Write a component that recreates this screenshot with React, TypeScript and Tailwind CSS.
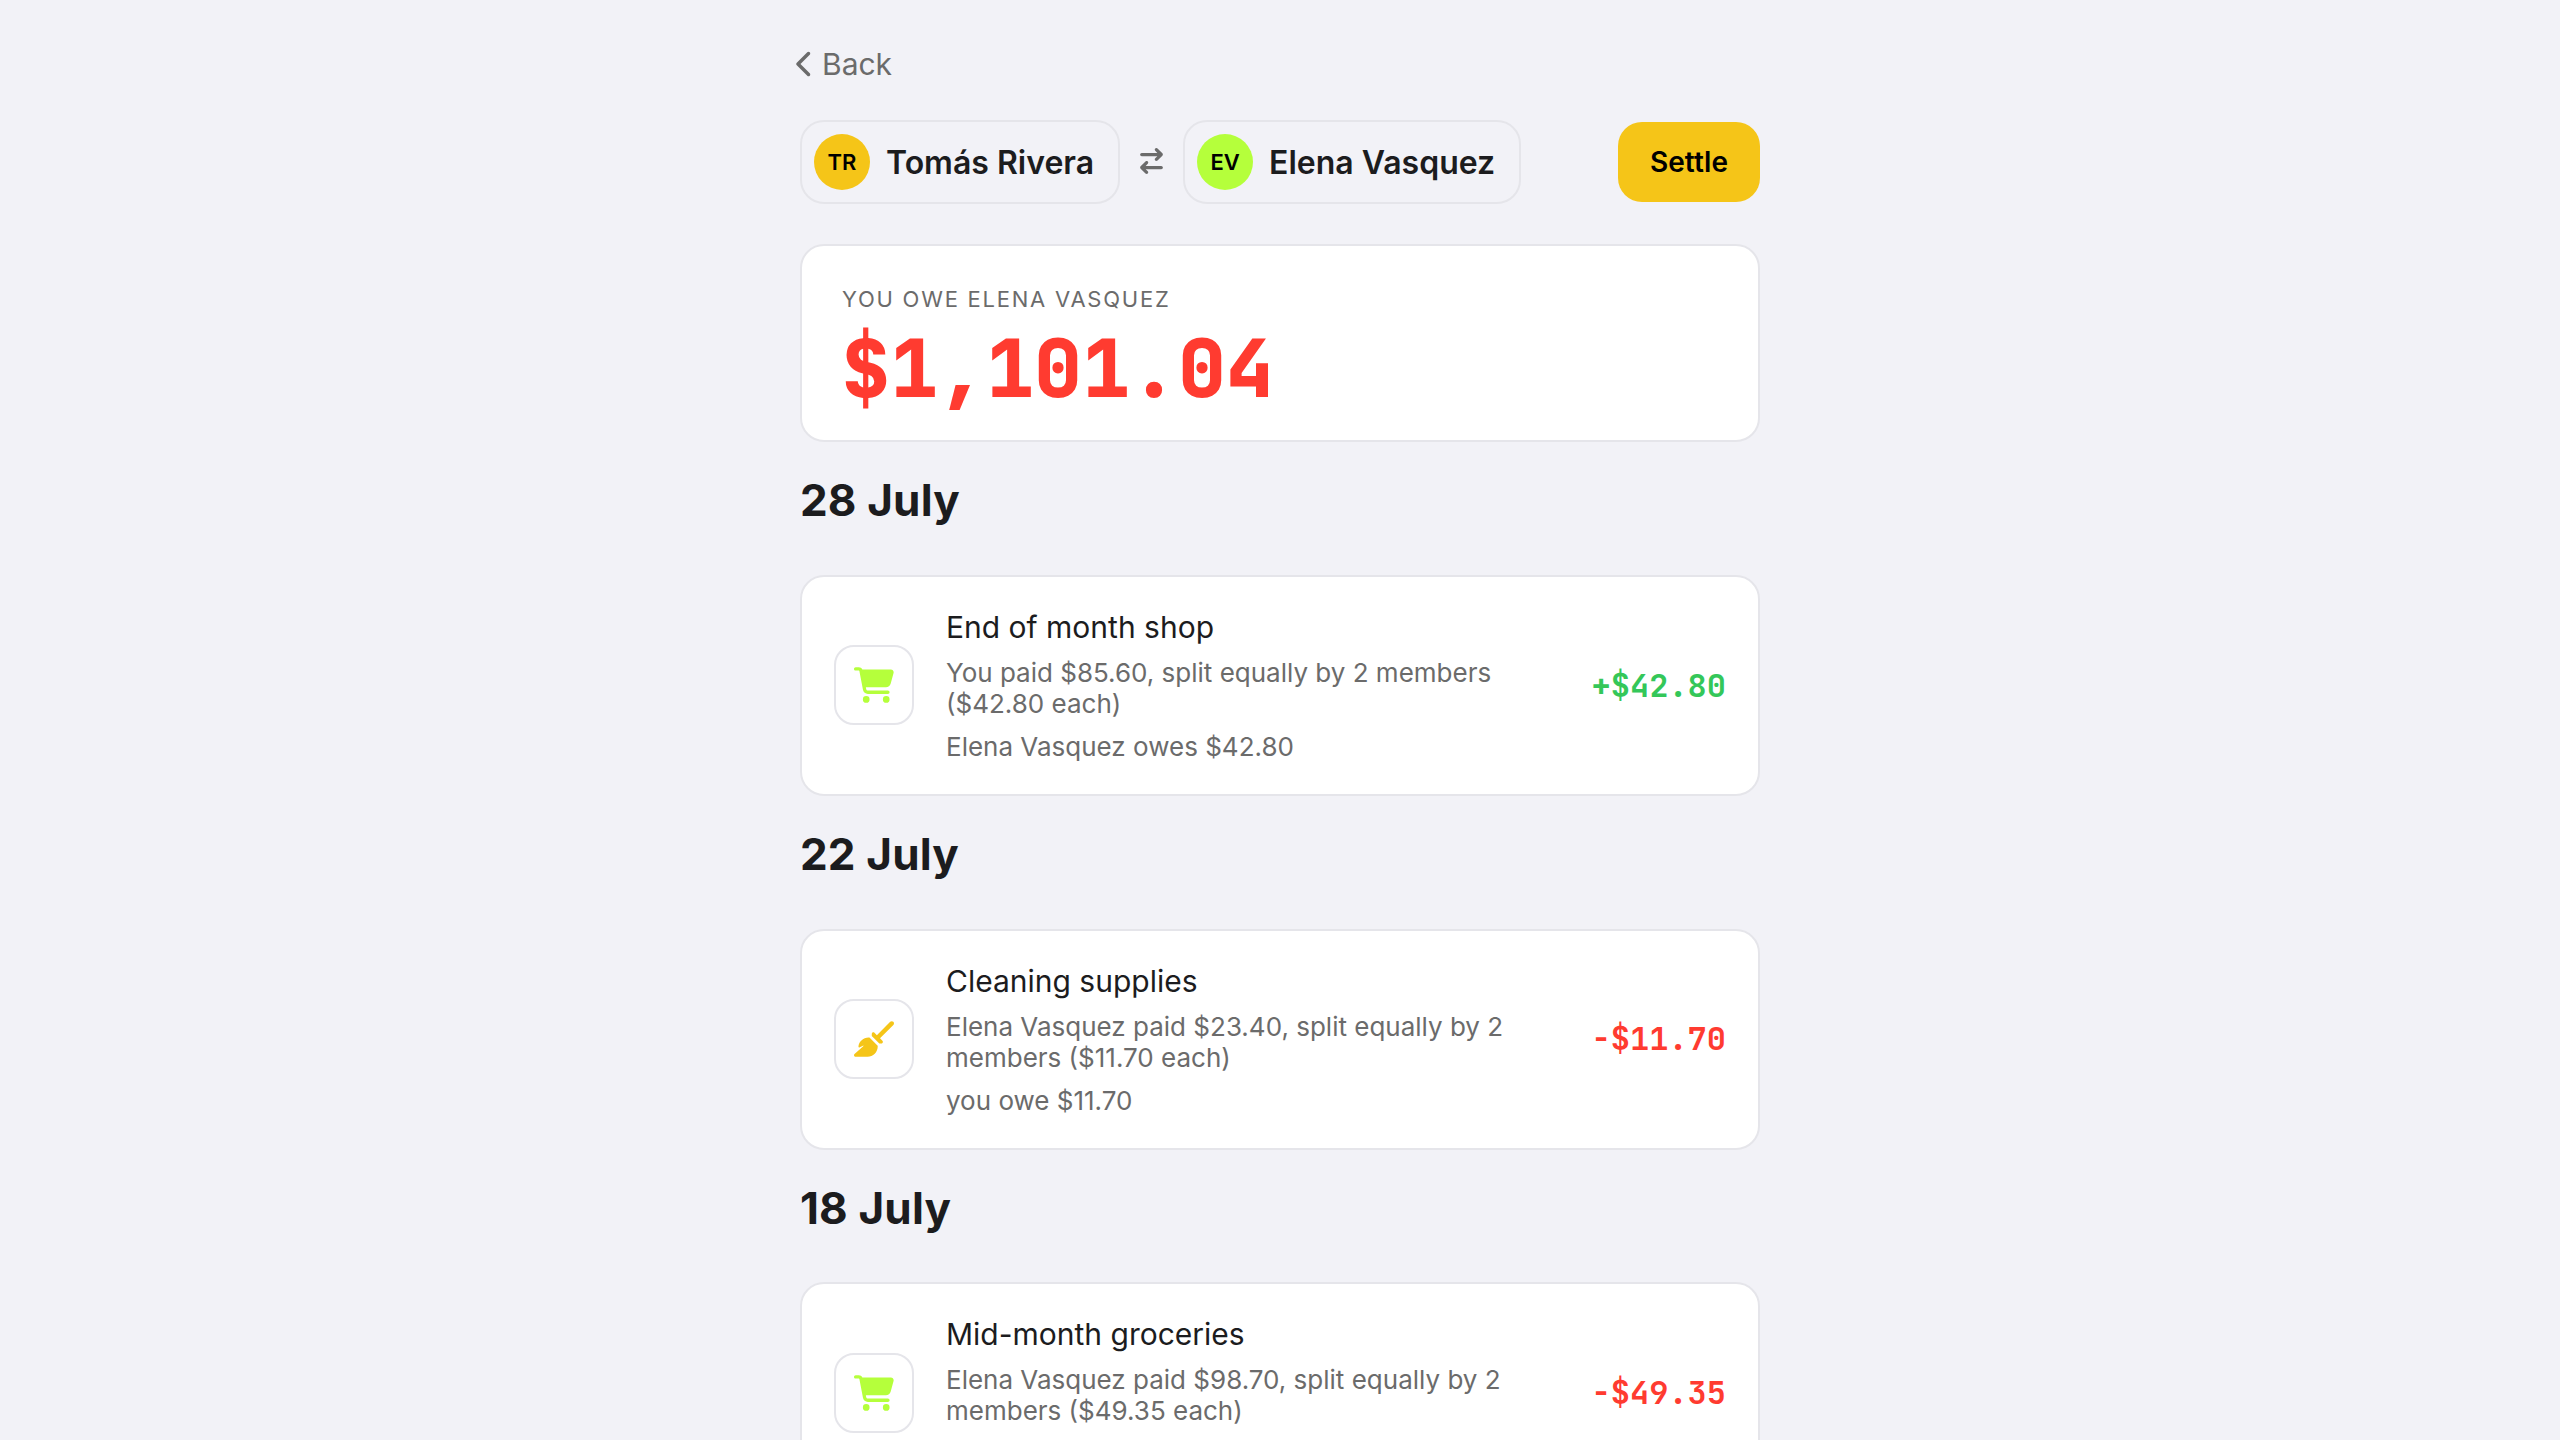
import { FaChevronLeft, FaArrowRightArrowLeft, FaCartShopping, FaBroom } from "react-icons/fa6";

const money = "font-['JetBrains_Mono','DejaVu_Sans_Mono',monospace]";

const groups = [
  { date: "28 July", title: "End of month shop", icon: "cart", detail: "You paid $85.60, split equally by 2 members ($42.80 each)", note: "Elena Vasquez owes $42.80", amount: "+$42.80" },
  { date: "22 July", title: "Cleaning supplies", icon: "broom", detail: "Elena Vasquez paid $23.40, split equally by 2 members ($11.70 each)", note: "you owe $11.70", amount: "-$11.70" },
  { date: "18 July", title: "Mid-month groceries", icon: "cart", detail: "Elena Vasquez paid $98.70, split equally by 2 members ($49.35 each)", note: "", amount: "-$49.35" },
];

function Person({ initials, name, color }: { initials: string; name: string; color: string }) {
  return (
    <div className="flex h-[84px] items-center gap-4 rounded-3xl border-2 border-[#e5e5ea] pr-6 pl-3">
      <div className={`flex size-14 items-center justify-center rounded-full text-[22px] font-semibold text-black ${color}`}>{initials}</div>
      <span className="pt-0.5 text-[32px] leading-[38px] font-semibold whitespace-nowrap text-[#1c1c1e]">{name}</span>
    </div>
  );
}

export default function App() {
  return (
    <div className="h-[1440px] overflow-hidden bg-[#f2f2f7] font-['Inter',sans-serif]">
      <main className="mx-auto w-[960px] leading-[1.2]">
        <div className="-ml-1.5 flex h-[120px] items-center gap-1.5 pt-2 text-[30px] text-[#6b6b6b]">
          <FaChevronLeft className="mb-px h-7 w-[22px]" />
          <span>Back</span>
        </div>
        <div className="flex h-[84px] items-center">
          <Person initials="TR" name="Tomás Rivera" color="bg-[#f5c518]" />
          <FaArrowRightArrowLeft className="mx-5 mb-0.5 h-[26px] w-[23px] text-[#6b6b6b]" />
          <Person initials="EV" name="Elena Vasquez" color="bg-[#b5ff3b]" />
          <button className="ml-auto h-20 w-[142px] rounded-3xl bg-[#f5c518] pt-px text-center text-[28px] font-semibold tracking-[0.1px] text-black">Settle</button>
        </div>
        <section className="mt-10 h-[198px] rounded-3xl border-2 border-[#e5e5ea] bg-white px-10 pt-10">
          <div className="text-[22px] leading-[26px] tracking-[1.76px] text-[#6b6b6b]">YOU OWE ELENA VASQUEZ</div>
          <div className={`pt-3 text-[80px] leading-[88px] font-extrabold text-[#ff3b30] ${money}`}>$1,101.04</div>
        </section>
        {groups.map((g) => (
          <section key={g.date}>
            <h2 className="h-[132.78px] pt-[31.2px] text-[44px] leading-[54px] font-bold tracking-[0.15px] text-[#1c1c1e]">{g.date}</h2>
            <div className="flex h-[221px] items-center gap-8 rounded-3xl border-2 border-[#e5e5ea] bg-white px-8">
              <div className="flex size-20 shrink-0 items-center justify-center rounded-[20px] border-2 border-[#e5e5ea]">
                {g.icon === "cart" ? <FaCartShopping className="h-9 w-10 text-[#b5ff3b]" /> : <FaBroom className="h-9 w-10 text-[#f5c518]" />}
              </div>
              <div className="flex flex-1 flex-col gap-3 text-[26px] leading-[31px] text-[#6b6b6b]">
                <div className="text-[30px] leading-9 text-[#1c1c1e]">{g.title}</div>
                <div className="max-w-[580px]">{g.detail}</div>
                <div className="h-[31px]">{g.note}</div>
              </div>
              <div className={`pt-px text-[32px] font-bold ${money} ${g.amount[0] === "+" ? "text-[#34c759]" : "text-[#ff3b30]"}`}>{g.amount}</div>
            </div>
          </section>
        ))}
      </main>
    </div>
  );
}
